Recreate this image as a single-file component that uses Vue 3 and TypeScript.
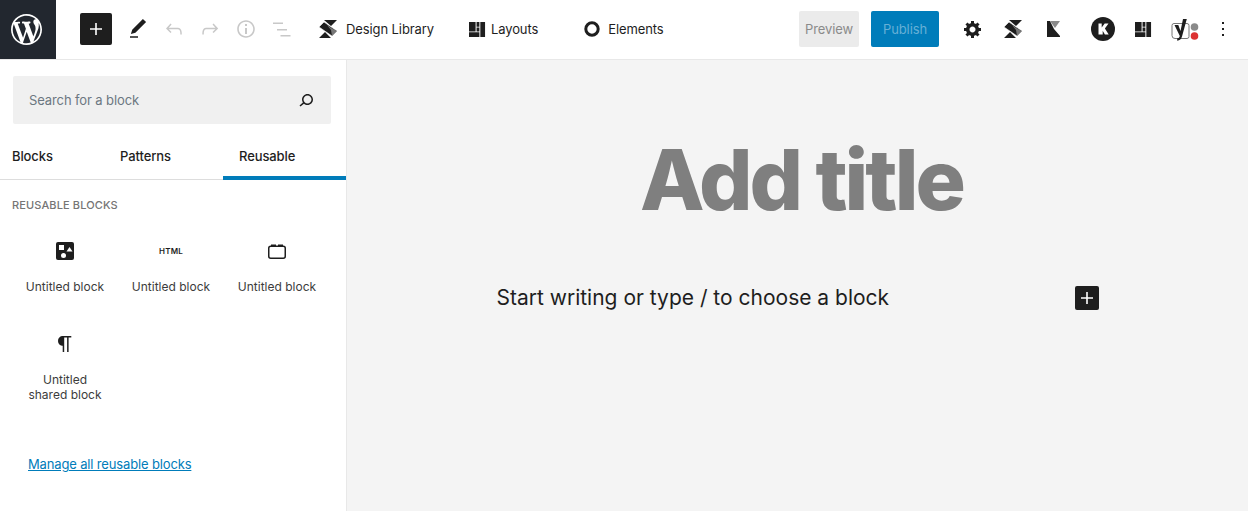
<script setup lang="ts">
type Block = {
  id: number;
  icon: string;
  label: string;
}

const blocks: Block[] = [
  { id: 1, icon: 'shapes', label: 'Untitled block' },
  { id: 2, icon: 'html', label: 'Untitled block' },
  { id: 3, icon: 'tray', label: 'Untitled block' },
  { id: 4, icon: 'para', label: 'Untitled shared block' },
];
</script>

<template>
  <div class="editor">
    <header class="topbar">
      <a class="wp-logo">
        <svg width="31" height="31" viewBox="0 0 20 20" fill="#fff"><path d="M20 10c0-5.51-4.49-10-10-10C4.48 0 0 4.49 0 10c0 5.52 4.48 10 10 10 5.51 0 10-4.48 10-10zM7.78 15.37L4.37 6.22c.55-.02 1.17-.08 1.17-.08.5-.06.44-1.13-.06-1.11 0 0-1.45.11-2.37.11-.18 0-.37 0-.58-.01C4.12 2.69 6.87 1.11 10 1.11c2.33 0 4.45.87 6.05 2.34-.68-.11-1.65.39-1.65 1.58 0 .74.45 1.36.9 2.1.35.61.55 1.36.55 2.46 0 1.49-1.4 5-1.4 5l-3.03-8.37c.54-.02.82-.17.82-.17.5-.05.44-1.25-.06-1.22 0 0-1.44.12-2.38.12-.87 0-2.33-.12-2.33-.12-.5-.03-.56 1.2-.06 1.22l.92.08 1.26 3.41zM17.41 10c.24-.64.74-1.87.43-4.25.7 1.29 1.05 2.71 1.05 4.25 0 3.29-1.73 6.24-4.4 7.78.97-2.59 1.94-5.2 2.92-7.78zM6.1 18.09C3.12 16.65 1.11 13.53 1.11 10c0-1.3.23-2.48.72-3.59C3.25 10.3 4.67 14.2 6.1 18.09zm4.03-6.63l2.58 6.98c-.86.29-1.76.45-2.71.45-.79 0-1.57-.11-2.29-.33.81-2.38 1.62-4.74 2.42-7.1z" /></svg>
      </a>

      <button class="add-main">
        <svg width="24" height="24" viewBox="0 0 24 24" fill="#fff"><path d="M18 11.2h-5.2V6h-1.6v5.2H6v1.6h5.2V18h1.6v-5.2H18z" /></svg>
      </button>
      <div class="tool">
        <svg width="24" height="24" viewBox="0 0 24 24" fill="#1e1e1e"><path d="M20.1 5.1L16.9 2 6.2 12.7l-1.3 4.4 4.5-1.3L20.1 5.1zM4 20.8h8v-1.5H4v1.5z" /></svg>
      </div>
      <div class="tool off">
        <svg width="24" height="24" viewBox="0 0 24 24"><path d="M18.3 11.7c-.6-.6-1.4-.9-2.3-.9H6.7l2.9-3.3-1.1-1-4.5 5L8.5 16l1-1-2.7-2.7H16c.5 0 .9.2 1.3.5 1 1 1 3.4 1 4.5v.3h1.5v-.2c0-1.5 0-4.3-1.5-5.7z" /></svg>
      </div>
      <div class="tool off">
        <svg width="24" height="24" viewBox="0 0 24 24"><path d="M15.6 6.5l-1.1 1 2.9 3.3H8c-.9 0-1.7.3-2.3.9-1.4 1.5-1.4 4.2-1.4 5.6v.2h1.5v-.3c0-1.1 0-3.5 1-4.5.3-.3.7-.5 1.3-.5h9.2L14.500 15l1.1 1.1 4.6-4.6-4.6-5z" /></svg>
      </div>
      <div class="tool off">
        <svg width="24" height="24" viewBox="0 0 24 24"><path d="M12 3.2c-4.8 0-8.8 3.9-8.8 8.8 0 4.8 3.9 8.8 8.8 8.8 4.8 0 8.8-3.9 8.8-8.8 0-4.8-4-8.8-8.8-8.8zm0 16c-4 0-7.2-3.3-7.2-7.2C4.8 8 8 4.8 12 4.8s7.2 3.3 7.2 7.2c0 4-3.2 7.2-7.2 7.2zM11 17h2v-6h-2v6zm0-8h2V7h-2v2z" /></svg>
      </div>
      <div class="tool off">
        <svg width="24" height="24" viewBox="0 0 24 24"><path d="M3 5.500h10v1.500H3zM7 12h10v1.500H7zM10.500 18h10v1.500h-10z" /></svg>
      </div>

      <div class="lib lib-design">
        <svg width="20" height="20" viewBox="0 0 20 20"><path fill="#1e1e1e" d="M6 1h13l-6 6zM1 19l6-6 6 6z" /><path fill="#1e1e1e" stroke="#fff" stroke-width=".6" d="M1 8l5-5 13 9-5 5z" /><path fill="#777" d="M9 6l5 3.500 5 2.500-5 5-1-6z" /></svg>
        <span>Design Library</span>
      </div>
      <div class="lib lib-layouts">
        <svg width="17" height="17" viewBox="0 0 18 18" fill="#1e1e1e"><path d="M0 1h7v10H0zM8 1h3v5H8zM12 1h5v16h-5zM8 7h3v4H8zM0 12h11v5H0z" /></svg>
        <span>Layouts</span>
      </div>
      <div class="lib lib-elements">
        <svg width="16" height="16" viewBox="0 0 16 16"><circle cx="8" cy="8" r="6.200" fill="none" stroke="#1e1e1e" stroke-width="3" /></svg>
        <span>Elements</span>
      </div>

      <button class="preview">Preview</button>
      <button class="publish">Publish</button>

      <div class="tool plug gear">
        <svg width="20" height="20" viewBox="0 0 20 20" fill="#1e1e1e"><path d="M18 12h-2.180c-.17.7-.44 1.350-.81 1.930l1.540 1.540-2.100 2.100-1.540-1.540c-.58.36-1.230.63-1.910.79V19H8v-2.180c-.68-.16-1.330-.43-1.910-.79l-1.540 1.540-2.120-2.120 1.540-1.540c-.36-.58-.63-1.230-.79-1.910H1V9.030h2.170c.16-.7.44-1.350.8-1.940L2.430 5.550l2.100-2.100 1.540 1.540c.58-.37 1.240-.64 1.930-.81V2h3v2.180c.68.16 1.330.43 1.910.79l1.540-1.540 2.120 2.120-1.540 1.540c.36.59.64 1.240.8 1.940H18V12zm-8.500 1.500c1.660 0 3-1.340 3-3s-1.340-3-3-3-3 1.340-3 3 1.340 3 3 3z" /></svg>
      </div>
      <div class="tool plug">
        <svg width="20" height="20" viewBox="0 0 20 20"><path fill="#1e1e1e" d="M6 1h13l-6 6zM1 19l6-6 6 6z" /><path fill="#1e1e1e" stroke="#fff" stroke-width=".6" d="M1 8l5-5 13 9-5 5z" /><path fill="#777" d="M9 6l5 3.500 5 2.500-5 5-1-6z" /></svg>
      </div>
      <div class="tool plug">
        <svg width="15" height="16" viewBox="0 0 15 16"><path fill="#1e1e1e" d="M1 0h3l4 8 6 7v1H1z" /><path fill="#8a8a8a" d="M4 0h10L9 7z" /></svg>
      </div>
      <div class="tool plug kcircle">
        <svg width="24" height="24" viewBox="0 0 24 24"><circle cx="12" cy="12" r="12" fill="#1e1e1e" /><path fill="#fff" d="M7.500 6.500h3.200v4l3-4h3.800l-3.600 5 3.800 6h-3.800l-2.200-3.800v3.800H7.500z" /></svg>
      </div>
      <div class="tool plug">
        <svg width="17" height="17" viewBox="0 0 18 18" fill="#1e1e1e"><path d="M0 1h7v10H0zM8 1h3v5H8zM12 1h5v16h-5zM8 7h3v4H8zM0 12h11v5H0z" /></svg>
      </div>
      <div class="yoast">
        <svg width="30" height="26" viewBox="0 0 30 26"><path d="M4 7.500h13a2 2 0 0 1 2 2v11a2 2 0 0 1-2 2H5a3 3 0 0 1-3-3V9.500a2 2 0 0 1 2-2z" fill="none" stroke="#777" stroke-width="1" /><path fill="#1e1e1e" d="M4.500 9h3.800l2.200 6L13 3h3.800L12 20.500c-.7 2.500-2.200 4-4.800 4.300v-2.500c1.500-.2 2.200-.9 2.600-2.400z" /><circle cx="24.500" cy="11" r="3.800" fill="#8a8a8a" /><circle cx="24.500" cy="20" r="3.800" fill="#dc3232" /></svg>
      </div>
      <div class="tool more">
        <svg width="24" height="24" viewBox="0 0 24 24" fill="#1e1e1e"><path d="M13 19h-2v-2h2v2zm0-6h-2v-2h2v2zm0-6h-2V5h2v2z" /></svg>
      </div>
    </header>

    <div class="body">
      <aside class="inserter">
        <div class="search">
          <span>Search for a block</span>
          <svg width="24" height="24" viewBox="0 0 24 24" fill="#1e1e1e"><path d="M13.500 6C10.500 6 8 8.500 8 11.500c0 1.100.3 2.100.9 3l-3.400 3 1 1.100 3.400-2.900c1 .9 2.200 1.400 3.600 1.400 3 0 5.500-2.500 5.500-5.500C19 8.500 16.500 6 13.500 6zm0 9.500c-2.200 0-4-1.800-4-4s1.800-4 4-4 4 1.800 4 4-1.800 4-4 4z" /></svg>
        </div>

        <nav class="tabs">
          <div class="tab first">Blocks</div>
          <div class="tab">Patterns</div>
          <div class="tab active">Reusable</div>
        </nav>

        <h2 class="panel-title">Reusable blocks</h2>

        <div class="block-grid">
          <div v-for="block in blocks" :key="block.id" class="block-item">
            <div class="block-icon">
              <svg v-if="block.icon === 'shapes'" width="18" height="18" viewBox="0 0 18 18">
                <rect width="18" height="18" rx="2" fill="#1e1e1e" />
                <rect x="3" y="3" width="5" height="5" fill="#fff" />
                <path d="M10.500 9.500l3-4.500 3 4.500z" fill="#fff" />
                <circle cx="7.500" cy="13.500" r="2.500" fill="#fff" />
              </svg>
              <span v-else-if="block.icon === 'html'" class="html-icon">HTML</span>
              <svg v-else-if="block.icon === 'tray'" width="18" height="18" viewBox="0 0 18 18">
                <rect x=".75" y="4.250" width="16.500" height="12" rx="2" fill="none" stroke="#1e1e1e" stroke-width="1.500" />
                <path d="M3 2.500h5v2H3zM10 2.500h5v2h-5z" fill="#1e1e1e" />
              </svg>
              <svg v-else width="24" height="24" viewBox="0 0 24 24" fill="#1e1e1e"><path d="M18.300 4H9.900v-.1l-.9.2c-2.300.4-4 2.400-4 4.800s1.700 4.400 4 4.800l.7.1V20h1.500V5.500h2.900V20h1.500V5.500h2.700V4z" /></svg>
            </div>
            <div class="block-label">{{ block.label }}</div>
          </div>
        </div>

        <a class="manage">Manage all reusable blocks</a>
      </aside>

      <main class="canvas">
        <div class="writing">
          <h1 class="title">Add title</h1>
          <div class="appender">
            <p>Start writing or type / to choose a block</p>
            <button class="add-inline">
              <svg width="24" height="24" viewBox="0 0 24 24" fill="#fff"><path d="M18 11.200h-5.200V6h-1.600v5.200H6v1.600h5.200V18h1.600v-5.200H18z" /></svg>
            </button>
          </div>
        </div>
      </main>
    </div>
  </div>
</template>

<style>
html, body {
  margin: 0;
  background: #fff;
}
</style>

<style scoped>
.editor {
  width: 1248px;
  height: 511px;
  overflow: hidden;
  display: flex;
  flex-direction: column;
  font-family: Inter, "Noto Sans", sans-serif;
  color: #1e1e1e;
}

/* top toolbar */
.topbar {
  height: 60px;
  box-sizing: border-box;
  border-bottom: 1px solid #e8e8e8;
  padding-bottom: 1px;
  display: flex;
  align-items: center;
  flex-shrink: 0;
}
.wp-logo {
  width: 56px;
  height: 59px;
  box-sizing: border-box;
  padding-right: 4px;
  margin-bottom: -1px;
  background: #22272f;
  display: flex;
  align-items: center;
  justify-content: center;
}
button {
  border: 0;
  padding: 0;
  font-family: inherit;
}
.add-main {
  width: 32px;
  height: 32px;
  margin-left: 24px;
  margin-right: 8px;
  background: #1e1e1e;
  border-radius: 2px;
  display: flex;
  align-items: center;
  justify-content: center;
}
.tool {
  width: 36px;
  height: 36px;
  display: flex;
  align-items: center;
  justify-content: center;
}
.tool.off svg {
  fill: #c8c8c8;
}
.lib {
  display: flex;
  align-items: center;
  font-size: 13px;
  letter-spacing: -.1px;
  color: #1e1e1e;
}
.lib-design {
  margin-left: 18px;
  gap: 8px;
}
.lib-layouts {
  margin-left: 35px;
  gap: 5px;
}
.lib-elements {
  margin-left: 46px;
  gap: 8px;
}
.preview {
  margin-left: auto;
  width: 60px;
  height: 36px;
  background: #ebebeb;
  color: #8a8a8a;
  font-size: 13px;
  letter-spacing: -.1px;
  border-radius: 2px;
}
.publish {
  margin-left: 12px;
  margin-right: 16px;
  width: 68px;
  height: 36px;
  background: #007cba;
  color: #66b0d6;
  font-size: 13px;
  letter-spacing: -.1px;
  border-radius: 2px;
}
.plug {
  margin-right: 4px;
}
.kcircle {
  margin-left: 10px;
}
.yoast {
  width: 36px;
  height: 36px;
  margin-left: 2px;
  display: flex;
  align-items: center;
  justify-content: center;
}
.more {
  margin-left: 2px;
  margin-right: 7px;
}

.body {
  flex: 1;
  display: flex;
  min-height: 0;
}

/* left panel */
.inserter {
  width: 347px;
  box-sizing: border-box;
  border-right: 1px solid #e8e8e8;
  flex-shrink: 0;
  padding-top: 16px;
}
.search {
  margin: 0 15px 0 13px;
  height: 48px;
  background: #f0f0f0;
  border-radius: 2px;
  display: flex;
  align-items: center;
  justify-content: space-between;
  padding: 0 13px 0 16px;
  font-size: 13px;
  letter-spacing: -.11px;
  color: #6c7781;
}
.tabs {
  display: grid;
  grid-template-columns: 104px 119px 123px;
  height: 56px;
  border-bottom: 1px solid #ddd;
  box-sizing: border-box;
}
.tab {
  padding: 9px 0 0 16px;
  font-size: 13px;
  font-weight: 500;
  letter-spacing: -.1px;
  line-height: 47px;
  height: 56px;
  box-sizing: border-box;
}
.tab.first {
  padding-left: 12px;
}
.tab.active {
  border-bottom: 4px solid #007cba;
}
.panel-title {
  margin: 17px 0 0 12px;
  font-size: 11px;
  line-height: 16px;
  font-weight: 500;
  letter-spacing: .12px;
  text-transform: uppercase;
  color: #757575;
}
.block-grid {
  display: grid;
  grid-template-columns: repeat(3, 106px);
  margin: 26px 0 0 12px;
  row-gap: 19px;
}
.block-item {
  text-align: center;
  height: 74px;
}
.block-icon {
  height: 24px;
  display: flex;
  align-items: center;
  justify-content: center;
}
.block-label {
  margin: 16px auto 0;
  width: 82px;
  font-size: 12px;
  line-height: 15px;
  color: #3c3c3c;
}
.html-icon {
  font-size: 8px;
  font-weight: 600;
  letter-spacing: .2px;
  color: #1e1e1e;
}
.manage {
  display: block;
  margin: 50px 0 0 28px;
  font-size: 13px;
  line-height: 16px;
  letter-spacing: -.15px;
  color: #007cba;
  text-decoration: underline;
}

/* editor canvas */
.canvas {
  flex: 1;
  background: #f4f4f4;
  display: flex;
  justify-content: center;
}
.writing {
  width: 602px;
}
.title {
  margin: 76px 0 0;
  padding-left: 8px;
  text-align: center;
  font-size: 84px;
  line-height: 88px;
  font-weight: 800;
  letter-spacing: -3px;
  color: #7f7f7f;
}
.appender {
  margin-top: 60px;
  display: flex;
  align-items: center;
  justify-content: space-between;
}
.appender p {
  margin: 0;
  font-size: 21px;
  line-height: 28px;
  color: #1e1e1e;
}
.add-inline {
  width: 24px;
  height: 24px;
  background: #1e1e1e;
  border-radius: 2px;
  display: flex;
}
</style>
